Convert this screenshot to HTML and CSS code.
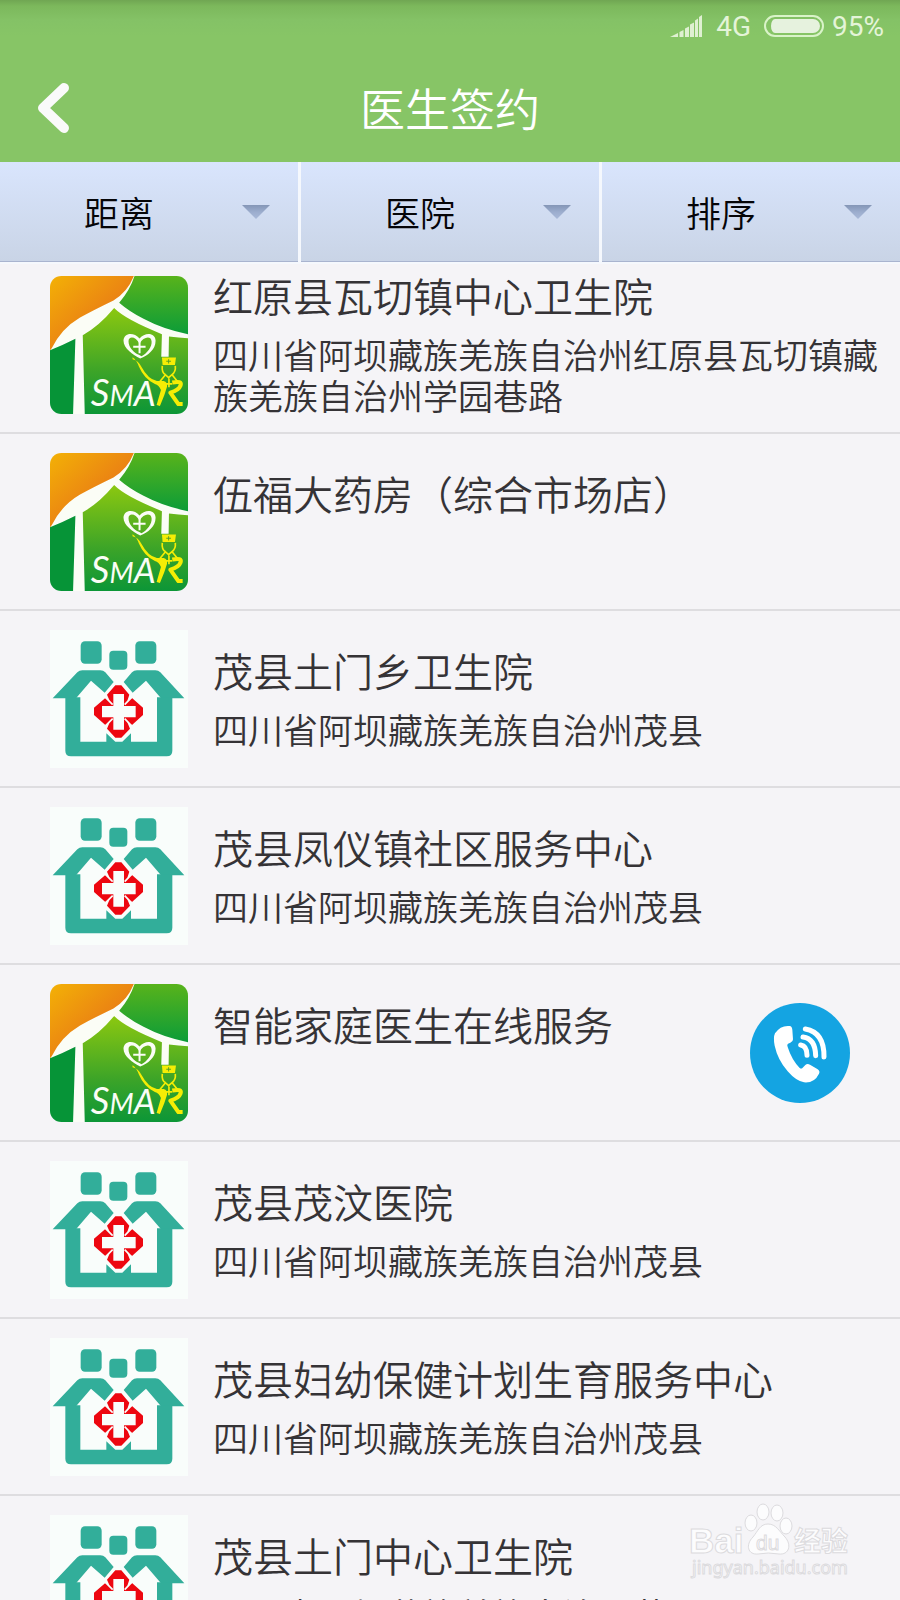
FILE: index.html
```html
<!DOCTYPE html>
<html lang="zh-CN">
<head>
<meta charset="utf-8">
<meta name="viewport" content="width=device-width, initial-scale=1">
<title>医生签约</title>
<link rel="stylesheet" href="styles.css">
</head>
<body>
<svg class="defs" aria-hidden="true">
  <defs>
    <linearGradient id="sun" x1="0" y1="0" x2="1" y2="1">
      <stop offset="0" stop-color="#f3b106"/><stop offset=".6" stop-color="#ea7f14"/><stop offset="1" stop-color="#e2680f"/>
    </linearGradient>
    <linearGradient id="roof" x1="0" y1="0" x2="0" y2="1">
      <stop offset="0" stop-color="#58b31b"/><stop offset="1" stop-color="#0c9c38"/>
    </linearGradient>
    <linearGradient id="wall" x1="0" y1="0" x2="0" y2="1">
      <stop offset="0" stop-color="#8cc810"/><stop offset=".6" stop-color="#3ca428"/><stop offset="1" stop-color="#0c9637"/>
    </linearGradient>
    <linearGradient id="tip" x1="0" y1="0" x2="0" y2="1">
      <stop offset="0" stop-color="#8496b6"/><stop offset=".5" stop-color="#9cadce"/><stop offset="1" stop-color="#a9b9d8"/>
    </linearGradient>
    <clipPath id="tile"><rect x="30" y="35" width="413" height="413" rx="34"/></clipPath>
  </defs>
  <symbol id="smart" viewBox="30 35 413 413">
    <g clip-path="url(#tile)">
      <path fill="#fbfdf6" d="M30 35h413v413H30z"/>
      <path fill="url(#sun)" d="M30 35H281Q262 83 220 108Q160 137 120 159Q64 192 36 250L30 258z"/>
      <path fill="url(#roof)" d="M283 35H443V209Q370 195 310 163Q268 142 237 115Q269 78 283 35z"/>
      <path fill="#069437" d="M30 257Q65 244 106 223L99 448H30z"/>
      <path fill="url(#wall)" d="M128 212Q174 188 222 131Q255 165 365 209L363 277H385L386 216Q415 220 443 221V448H134z"/>
      <path fill="#fbfdf6" d="M300 282C278 271 250 252 250 229C250 205 280 201 298 222C314 202 346 204 346 229C346 256 323 273 300 282zM296 271L304 275C321 266 336 246 334 230C332 213 309 217 298 238C286 214 265 215 265 230C265 249 281 264 296 271z" fill-rule="evenodd"/>
      <path fill="none" stroke="#fbfdf6" stroke-width="6" d="M279 247h37M298 229v37"/>
      <text class="logo-letter" x="152" y="424"><tspan font-size="110">S</tspan><tspan font-size="84">M</tspan><tspan font-size="104">A</tspan></text>
      <path fill="#f5ed05" d="M365 279h42l-3 22h-37zM277 284q17 4 27 23 19 36 46 42h20q13 3 10 18l-8 25-13 32-10-3 13-45q-6-15-18-18-32-14-48-52-7-20-19-28z"/>
      <path stroke="#5ca321" stroke-width="3" d="M385 284v13M378 290h14"/>
      <path fill="none" stroke="#f5ed05" stroke-width="5" d="M366 304q-2 20 9 26l10 9 10-9q12-8 10-26M375 331l-16 20M396 331l15 19M386 342v26M376 358h20"/>
      <path fill="none" stroke="#f5ed05" stroke-width="12" stroke-linejoin="round" d="M396 354q30-6 25 8-5 15-31 22l24 34h13"/>
    </g>
  </symbol>
  <symbol id="clinic" viewBox="30 28 414 414">
    <path fill="#f9fdfb" d="M30 28h414v414H30z"/>
    <g fill="#32ae9a">
      <rect x="122" y="62" width="63" height="67" rx="13"/>
      <rect x="208" y="90" width="54" height="57" rx="12"/>
      <rect x="286" y="62" width="63" height="67" rx="13"/>
      <path d="M38 233L112 155Q118 149 127 149H181Q190 149 196 155L221 184 194 216 153 180 108 233z"/>
      <path d="M433 233L361 155Q355 149 346 149H291Q282 149 276 155L251 184 278 216 318 180 363 233z"/>
      <path d="M76 230H121V363H199V338L226 363H247L273 338V363H351V230H397V390Q397 407 380 407H93Q76 407 76 390z"/>
    </g>
    <path fill="#ed0710" d="M226 194H244L268 222 262 240 276 232 309 261V283L276 313 262 305 270 324 244 351H226L201 324 209 305 196 313 162 283V261L196 232 209 240 201 222z"/>
    <path fill="none" stroke="#f9fdfb" stroke-width="5" d="M194 228L218 252M277 228L254 252M194 318L218 294M277 318L254 294"/>
    <path fill="#f9fdfb" d="M220 220H252V256H287V290H252V327H220V290H186V256H220z"/>
  </symbol>
</svg>

<main class="app">
  <header class="header">
    <div class="status">
      <svg class="signal" viewBox="0 0 32 22" aria-hidden="true">
        <path d="M0 22L8 18V22zM9.500 17l4-2v7h-4zM15 13.500l4-2v10.500h-4zM20 9.500l4-2v14.500h-4zM25 5.500l3-2v18.500h-3zM29 2l3-2v22h-3z"/>
      </svg>
      <span class="network">4G</span>
      <span class="battery"></span>
      <span class="percent">95%</span>
    </div>
    <div class="titlebar">
      <button class="back" aria-label="返回">
        <svg width="34" height="50" viewBox="0 0 34 50"><path d="M28 5L7 25 28 45"/></svg>
      </button>
      <h1>医生签约</h1>
    </div>
  </header>

  <nav class="filters">
    <div class="filter"><select aria-label="距离"><option>距离</option></select><svg class="caret" viewBox="0 0 28 14"><path d="M0 0h28L14 14z"/></svg></div>
    <div class="filter"><select aria-label="医院"><option>医院</option></select><svg class="caret" viewBox="0 0 28 14"><path d="M0 0h28L14 14z"/></svg></div>
    <div class="filter"><select aria-label="排序"><option>排序</option></select><svg class="caret" viewBox="0 0 28 14"><path d="M0 0h28L14 14z"/></svg></div>
  </nav>

  <ul class="list">
    <li class="row"><svg class="logo"><use href="#smart"/></svg><div class="info"><h2>红原县瓦切镇中心卫生院</h2><p>四川省阿坝藏族羌族自治州红原县瓦切镇藏族羌族自治州学园巷路</p></div></li>
    <li class="row"><svg class="logo"><use href="#smart"/></svg><div class="info"><h2>伍福大药房（综合市场店）</h2><p></p></div></li>
    <li class="row"><svg class="logo"><use href="#clinic"/></svg><div class="info"><h2>茂县土门乡卫生院</h2><p>四川省阿坝藏族羌族自治州茂县</p></div></li>
    <li class="row"><svg class="logo"><use href="#clinic"/></svg><div class="info"><h2>茂县凤仪镇社区服务中心</h2><p>四川省阿坝藏族羌族自治州茂县</p></div></li>
    <li class="row"><svg class="logo"><use href="#smart"/></svg><div class="info"><h2>智能家庭医生在线服务</h2><p></p></div>
      <button class="call" aria-label="拨打电话">
        <svg viewBox="30 37 300 300">
          <path fill="#fff" d="M105 128Q122 103 149 106Q156 107 157 117L159 146Q159 154 151 156L144 159Q140 162 143 169Q155 207 179 232Q184 236 188 231L196 223Q202 217 210 222L233 236Q241 242 237 249Q223 278 192 275Q168 271 143 242Q113 207 104 165Q99 141 105 128z"/>
          <path fill="none" stroke="#fff" stroke-width="15" stroke-linecap="round" d="M182 163Q201 166 201 194M189 139Q226 144 227 195M196 115Q253 125 252 199"/>
        </svg>
      </button>
    </li>
    <li class="row"><svg class="logo"><use href="#clinic"/></svg><div class="info"><h2>茂县茂汶医院</h2><p>四川省阿坝藏族羌族自治州茂县</p></div></li>
    <li class="row"><svg class="logo"><use href="#clinic"/></svg><div class="info"><h2>茂县妇幼保健计划生育服务中心</h2><p>四川省阿坝藏族羌族自治州茂县</p></div></li>
    <li class="row"><svg class="logo"><use href="#clinic"/></svg><div class="info"><h2>茂县土门中心卫生院</h2><p>四川省阿坝藏族羌族自治州茂县</p></div></li>
  </ul>

  <svg class="watermark" viewBox="0 0 230 120">
    <g class="mark">
      <text class="mark-name" x="19" y="73" font-size="35">Bai</text>
      <ellipse cx="81" cy="43" rx="6" ry="8"/><ellipse cx="93" cy="32" rx="6" ry="8"/><ellipse cx="107" cy="33" rx="6" ry="8"/><ellipse cx="116" cy="46" rx="6" ry="8"/>
      <path d="M98 44C106 44 109 51 115 57C122 65 119 75 109 74Q98 72 88 74C78 75 75 65 83 57C88 51 90 44 98 44z"/>
      <text class="mark-du" x="86" y="70" font-size="21">du</text>
      <text class="mark-name" x="124" y="71" font-size="27">经验</text>
      <text class="mark-url" x="22" y="94" font-size="18">jingyan.baidu.com</text>
    </g>
  </svg>
</main>
</body>
</html>
```
FILE: styles.css
```css
* { box-sizing: border-box; }

body {
  margin: 0;
  background: #f5f4f7;
  color: #353336;
  font-family: "Noto Sans CJK SC", sans-serif;
}

h1, h2, p, ul { margin: 0; padding: 0; font-weight: 350; }

button { border: 0; padding: 0; background: none; cursor: pointer; }

.defs { position: absolute; width: 0; height: 0; }

.app {
  position: relative;
  display: flex;
  flex-direction: column;
  height: 100vh;
  overflow: hidden;
}

.header {
  flex: none;
  background: linear-gradient(#70a653 0, #7cb85c 6px, #84c266 20px, #87c566 36px);
}

.status {
  display: flex;
  align-items: center;
  justify-content: flex-end;
  height: 52px;
  padding-right: 16px;
  color: #e4f4d8;
  font-family: Roboto, sans-serif;
  font-size: 28px;
  font-weight: 400;
}

.signal { width: 32px; height: 22px; fill: #dff0d2; }
.network { margin-left: 14px; }

.battery {
  width: 60px;
  height: 22px;
  margin: 0 8px 0 13px;
  border: 2px solid #d9f3c8;
  border-radius: 11px;
  padding: 2px 2px 2px 5px;
  background: #e6f2de content-box;
}

.titlebar {
  display: grid;
  grid-template-columns: 100px 1fr 100px;
  align-items: center;
  height: 110px;
  padding-top: 2px;
}

.back { display: flex; padding-left: 36px; }
.back path { fill: none; stroke: #fafafa; stroke-width: 10; stroke-linecap: round; stroke-linejoin: round; }

.titlebar h1 { color: #fff; font-size: 45px; line-height: 60px; text-align: center; }

.filters {
  position: relative;
  z-index: 1;
  flex: none;
  display: grid;
  grid-template-columns: repeat(3, 1fr);
  gap: 3px;
  padding-bottom: 2px;
  background: #f5f8fd;
}

.filter { position: relative; }

.filter select {
  display: block;
  appearance: none;
  width: 100%;
  height: 100px;
  padding: 0 60px 0 0;
  border: 0;
  border-bottom: 1px solid #a9b4cf;
  border-radius: 0;
  background: linear-gradient(#d9e5fd, #c9d4e6);
  color: #050508;
  font: 350 35px "Noto Sans CJK SC", sans-serif;
  text-align: center;
  text-align-last: center;
}

.caret {
  position: absolute;
  top: 43px;
  right: 28px;
  width: 28px;
  height: 14px;
  fill: url(#tip);
  pointer-events: none;
}

.list {
  flex: 1;
  min-height: 0;
  margin-top: -7px;
  overflow-y: auto;
  scrollbar-width: none;
  list-style: none;
}

.row {
  display: flex;
  align-items: center;
  gap: 25px;
  min-height: 177px;
  padding: 0 16px 0 50px;
  border-bottom: 2px solid #dedde0;
}

.logo { flex: none; width: 138px; height: 138px; }
.info { flex: 1; padding-bottom: 3px; }

.info h2 { margin-bottom: 14px; font-size: 40px; line-height: 48px; }
.info p { min-height: 41px; font-size: 35px; line-height: 41px; }

.call {
  flex: none;
  width: 100px;
  height: 100px;
  margin-right: 34px;
  border-radius: 50%;
  background: #14a4e2;
}
.call svg { display: block; width: 100%; height: 100%; }

.logo-letter { font-family: Lato, sans-serif; font-style: italic; font-weight: 400; fill: #fbfdf6; }

.watermark {
  position: absolute;
  right: 0;
  bottom: 0;
  width: 230px;
  height: 120px;
  pointer-events: none;
}
.mark { fill: #fcfcfd; stroke: #dcdbde; stroke-width: 1; }
.mark-name { font-family: "Liberation Sans", "Noto Sans CJK SC", sans-serif; font-weight: 700; }
.mark-du { font-family: "Liberation Sans", sans-serif; }
.mark-url { font-family: "Noto Sans", sans-serif; }
```
